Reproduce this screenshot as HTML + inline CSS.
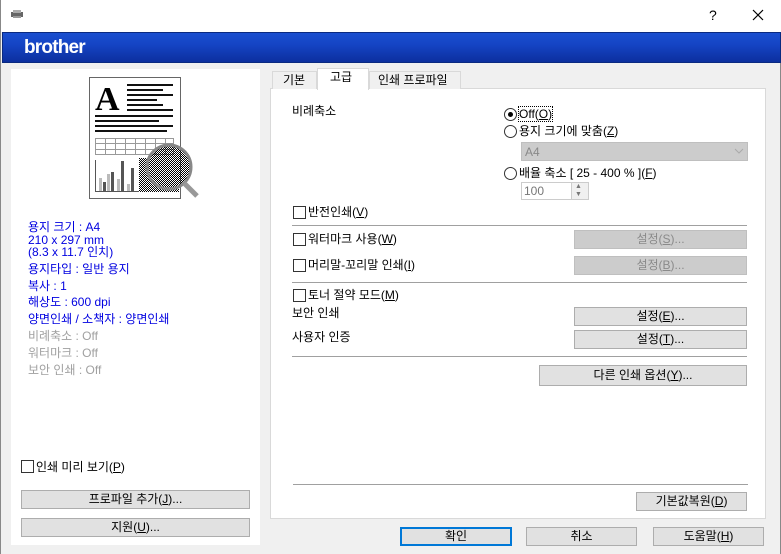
<!DOCTYPE html>
<html><head><meta charset="utf-8"><style>
*{margin:0;padding:0;box-sizing:border-box}
body{width:781px;height:554px;background:#f0f0f0;font-family:"Liberation Sans","Noto Sans CJK KR",sans-serif;font-size:12px;color:#000;position:relative;overflow:hidden;border-right:1px solid #888;border-left:1px solid #888}
.a{position:absolute;white-space:nowrap;line-height:14px}
.btn{position:absolute;background:#e1e1e1;border:1px solid #adadad;text-align:center;line-height:16px;height:19px}
.dis{background:#cccccc;border-color:#bfbfbf;color:#8a8a8a}
.cb{position:absolute;width:13px;height:13px;border:1px solid #333;background:#fff}
.rd{position:absolute;width:13px;height:13px;border:1px solid #333;border-radius:50%;background:#fff}
.ln{position:absolute;height:1px;background:#a0a0a0}
.b{color:#0000e0}.g{color:#a0a0a0}
u{text-decoration:underline}
</style></head><body>
<div style="position:absolute;left:0;top:0;width:781px;height:32px;background:#fff"></div>
<svg class="a" style="left:9px;top:9px" width="14" height="10"><rect x="1" y="3" width="12" height="5" fill="#666"/><rect x="3" y="1" width="8" height="3" fill="#aaa"/><rect x="3" y="7" width="8" height="2" fill="#999"/></svg>
<div class="a" style="left:708px;top:8px;font-size:14px">?</div>
<svg class="a" style="left:751px;top:9px" width="12" height="12"><path d="M1 1L11 11M11 1L1 11" stroke="#000" stroke-width="1.2"/></svg>
<div style="position:absolute;left:1px;top:32px;width:779px;height:31px;background:linear-gradient(#1a4fd0,#1544c4 40%,#0c2f9e);border:1px solid #0a2a80"></div>
<div class="a" style="left:23px;top:37px;color:#fff;font-weight:bold;font-size:19px;line-height:22px;letter-spacing:-0.8px">brother</div>

<div style="position:absolute;left:10px;top:69px;width:249px;height:476px;background:#fff"></div>
<svg class="a" style="left:86px;top:76px" width="124" height="128" shape-rendering="crispEdges">
<defs><pattern id="ck" width="2" height="2" patternUnits="userSpaceOnUse"><rect width="1" height="1" fill="#000"/><rect x="1" y="1" width="1" height="1" fill="#000"/></pattern></defs>
<path d="M2.5 1.5H93.5V122.5H2.5Z" fill="#fff" stroke="#666"/>
<text x="8" y="34" font-family="Liberation Serif" font-weight="bold" font-size="34" shape-rendering="auto">A</text>
<g stroke="#111" stroke-width="2"><path d="M40 9H86M40 14H76M40 19H86M40 24H70M40 29H76M40 34H86M8 40H86M8 45H72M8 50H86M8 55H80"/></g>
<g stroke="#999" fill="none"><path d="M8.5 62.5H86.5V78.5H8.5ZM8 67.5H86M8 73.5H86M18.5 62V79M28.5 62V79M38.5 62V79M48.5 62V79M58.5 62V79M68.5 62V79M78.5 62V79"/></g>
<path d="M8.5 84V115.5H52" stroke="#555" fill="none"/>
<g fill="#555"><rect x="12" y="102" width="3" height="13" fill="#bbb"/><rect x="16" y="106" width="3" height="9"/><rect x="20" y="98" width="3" height="17" fill="#bbb"/><rect x="24" y="96" width="3" height="19"/><rect x="30" y="103" width="3" height="12" fill="#bbb"/><rect x="34" y="85" width="3" height="30"/><rect x="40" y="108" width="3" height="7" fill="#bbb"/><rect x="44" y="92" width="3" height="23"/></g>
<rect x="52" y="82" width="40" height="34" fill="url(#ck)"/>
<circle cx="82" cy="91" r="22" fill="url(#ck)" stroke="#888" stroke-width="3" shape-rendering="auto"/>
<path d="M97 107L110 120" stroke="#999" stroke-width="5" shape-rendering="auto"/>
</svg>
<div class="a b" style="left:27px;top:220px">용지 크기 : A4</div>
<div class="a b" style="left:27px;top:233px">210 x 297 mm</div>
<div class="a b" style="left:27px;top:245px">(8.3 x 11.7 인치)</div>
<div class="a b" style="left:27px;top:262px">용지타입 : 일반 용지</div>
<div class="a b" style="left:27px;top:279px">복사 : 1</div>
<div class="a b" style="left:27px;top:295px">해상도 : 600 dpi</div>
<div class="a b" style="left:27px;top:312px">양면인쇄 / 소책자 : 양면인쇄</div>
<div class="a g" style="left:27px;top:329px">비례축소 : Off</div>
<div class="a g" style="left:27px;top:346px">워터마크 : Off</div>
<div class="a g" style="left:27px;top:363px">보안 인쇄 : Off</div>
<div class="cb" style="left:20px;top:460px"></div>
<div class="a" style="left:35px;top:460px">인쇄 미리 보기(<u>P</u>)</div>
<div class="btn" style="left:20px;top:490px;width:229px">프로파일 추가(<u>J</u>)...</div>
<div class="btn" style="left:20px;top:518px;width:229px">지원(<u>U</u>)...</div>

<div style="position:absolute;left:269px;top:88px;width:496px;height:431px;background:#fff;border:1px solid #d9d9d9"></div>
<div style="position:absolute;left:271px;top:71px;width:45px;height:18px;background:#f0f0f0;border:1px solid #d9d9d9;border-bottom:none"></div>
<div class="a" style="left:282px;top:73px">기본</div>
<div style="position:absolute;left:316px;top:68px;width:52px;height:22px;background:#fff;border:1px solid #d9d9d9;border-bottom:none"></div>
<div class="a" style="left:329px;top:70px">고급</div>
<div style="position:absolute;left:368px;top:71px;width:92px;height:18px;background:#f0f0f0;border:1px solid #d9d9d9;border-bottom:none"></div>
<div class="a" style="left:377px;top:73px">인쇄 프로파일</div>

<div class="a" style="left:291px;top:104px">비례축소</div>
<div class="rd" style="left:503px;top:108px"><div style="position:absolute;left:3px;top:3px;width:5px;height:5px;border-radius:50%;background:#000"></div></div>
<div class="a" style="left:518px;top:107px;outline:1px dotted #000">Off(<u>O</u>)</div>
<div class="rd" style="left:503px;top:125px"></div>
<div class="a" style="left:518px;top:124px">용지 크기에 맞춤(<u>Z</u>)</div>
<div style="position:absolute;left:520px;top:142px;width:227px;height:19px;background:#cccccc;border:1px solid #bfbfbf"></div>
<div class="a g" style="left:524px;top:145px;color:#888">A4</div>
<svg class="a" style="left:733px;top:148px" width="10" height="6"><path d="M1 1L5 5L9 1" stroke="#aaa" fill="none"/></svg>
<div class="rd" style="left:503px;top:167px"></div>
<div class="a" style="left:518px;top:166px">배율 축소 [ 25 - 400 % ](<u>F</u>)</div>
<div style="position:absolute;left:520px;top:182px;width:68px;height:18px;background:#fff;border:1px solid #ccc"></div>
<div class="a" style="left:523px;top:184px;color:#777">100</div>
<div style="position:absolute;left:570px;top:183px;width:17px;height:16px;background:#f0f0f0;border-left:1px solid #ccc"></div>
<div class="a" style="left:574px;top:183px;font-size:7px;line-height:8px;color:#777">▲<br>▼</div>

<div class="cb" style="left:292px;top:206px"></div>
<div class="a" style="left:307px;top:205px">반전인쇄(<u>V</u>)</div>
<div class="ln" style="left:291px;top:225px;width:455px"></div>
<div class="cb" style="left:292px;top:233px"></div>
<div class="a" style="left:307px;top:232px">워터마크 사용(<u>W</u>)</div>
<div class="btn dis" style="left:573px;top:230px;width:173px">설정(<u>S</u>)...</div>
<div class="cb" style="left:292px;top:259px"></div>
<div class="a" style="left:307px;top:258px">머리말-꼬리말 인쇄(<u>I</u>)</div>
<div class="btn dis" style="left:573px;top:256px;width:173px">설정(<u>B</u>)...</div>
<div class="ln" style="left:291px;top:282px;width:455px"></div>
<div class="cb" style="left:292px;top:289px"></div>
<div class="a" style="left:307px;top:288px">토너 절약 모드(<u>M</u>)</div>
<div class="a" style="left:291px;top:306px">보안 인쇄</div>
<div class="btn" style="left:573px;top:307px;width:173px">설정(<u>E</u>)...</div>
<div class="a" style="left:291px;top:330px">사용자 인증</div>
<div class="btn" style="left:573px;top:330px;width:173px">설정(<u>T</u>)...</div>
<div class="ln" style="left:291px;top:356px;width:455px"></div>
<div class="btn" style="left:538px;top:365px;width:208px;height:21px;line-height:18px">다른 인쇄 옵션(<u>Y</u>)...</div>
<div class="ln" style="left:292px;top:484px;width:455px"></div>
<div class="btn" style="left:635px;top:492px;width:111px">기본값복원(<u>D</u>)</div>

<div class="btn" style="left:399px;top:527px;width:112px;border:2px solid #0078d7;line-height:14px">확인</div>
<div class="btn" style="left:525px;top:527px;width:111px">취소</div>
<div class="btn" style="left:652px;top:527px;width:111px">도움말(<u>H</u>)</div>
</body></html>
